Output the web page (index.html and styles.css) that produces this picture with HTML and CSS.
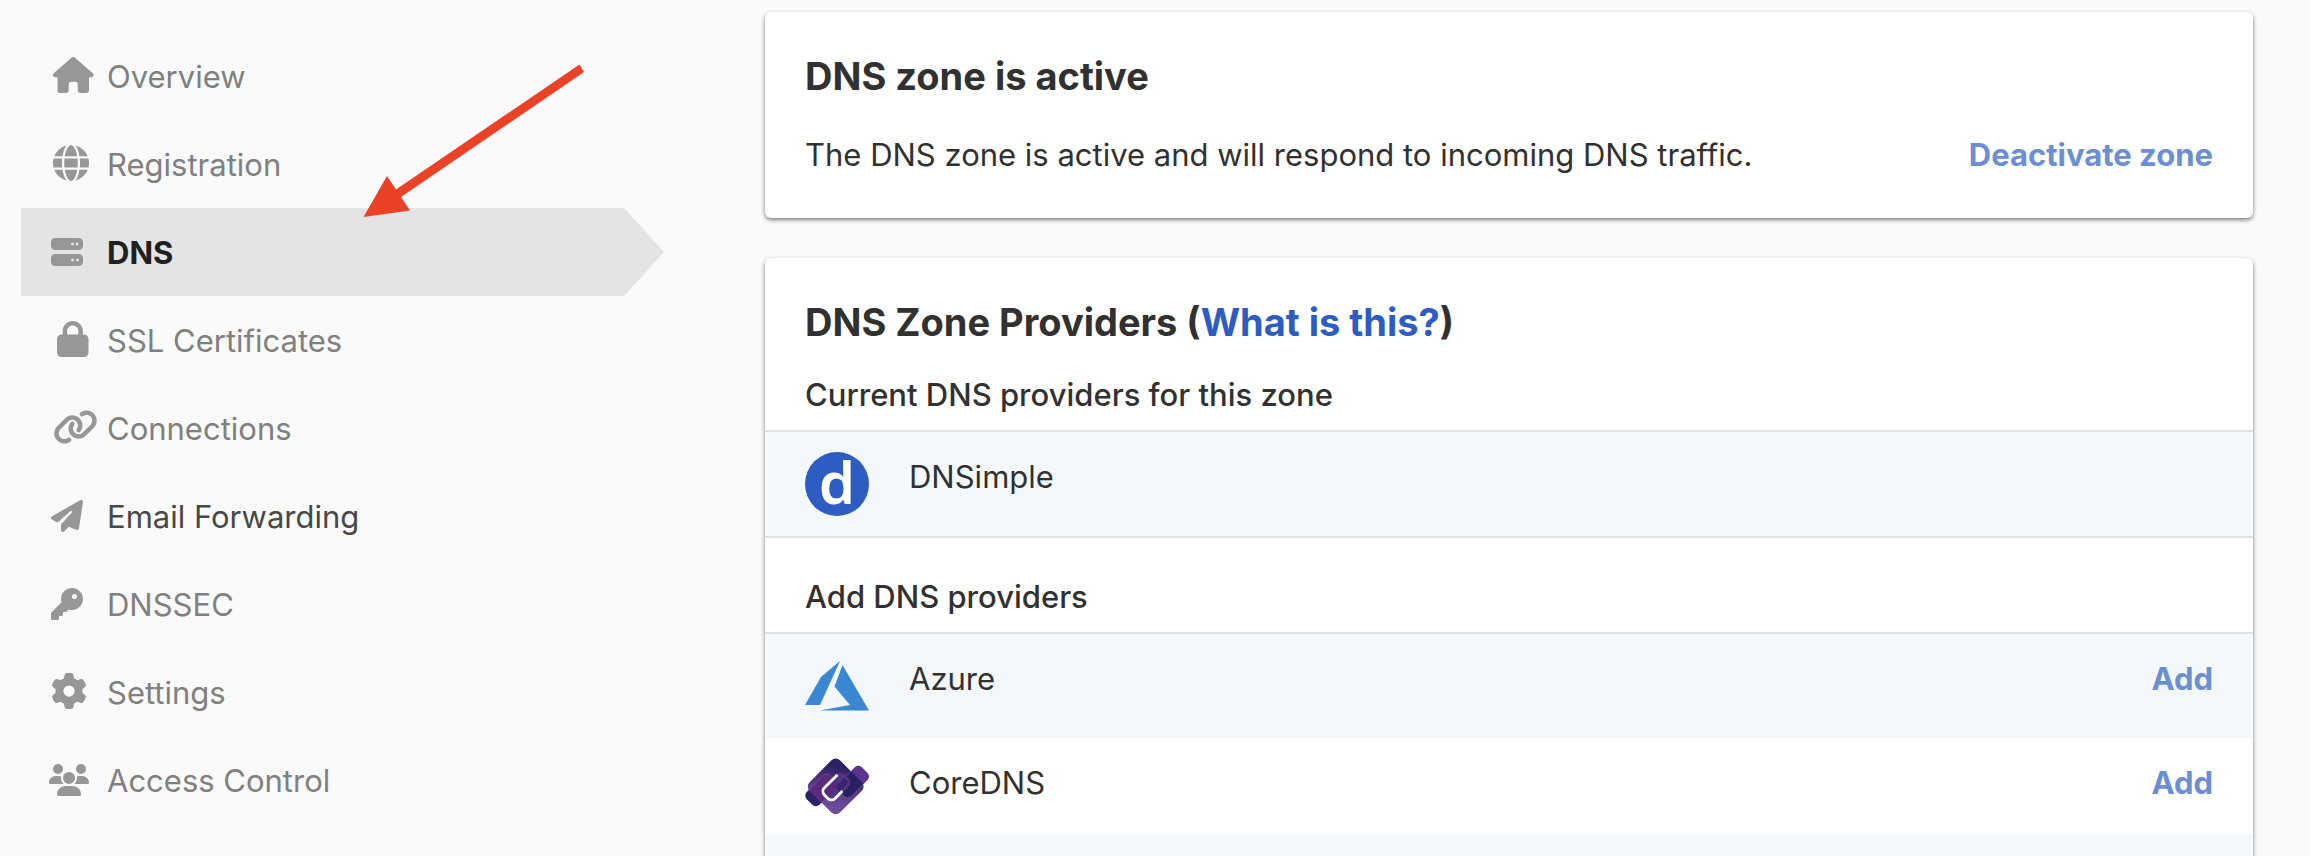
FILE: index.html
```html
<!DOCTYPE html>
<html lang="en">
<head>
<meta charset="utf-8">
<title>DNS</title>
<link rel="stylesheet" href="styles.css">
</head>
<body>
<div class="page">
  <nav class="sidebar" aria-label="Domain">
    <a class="nav-item" href="#overview"><span class="nav-icon"><svg class="icon-large" viewBox="0 0 576 512"><path d="M575.8 255.5c0 18-15 32.1-32 32.1h-32l.7 160.2c0 2.7-.2 5.4-.5 8.1V472c0 22.1-17.9 40-40 40H456c-1.1 0-2.2 0-3.3-.1c-1.4 .1-2.8 .1-4.2 .1H416 392c-22.1 0-40-17.9-40-40V448 384c0-17.7-14.3-32-32-32H256c-17.7 0-32 14.3-32 32v64 24c0 22.1-17.9 40-40 40H160 128.1c-1.5 0-3-.1-4.5-.2c-1.2 .1-2.4 .2-3.6 .2H104c-22.1 0-40-17.9-40-40V360c0-.9 0-1.9 .1-2.8V287.6H32c-18 0-32-14-32-32.1c0-9 3-17 10-24L266.4 8c7-7 15-8 22-8s15 2 21 7L564.8 231.5c8 7 12 15 11 24z"/></svg></span>Overview</a>
    <a class="nav-item" href="#registration"><span class="nav-icon"><svg class="icon-large" viewBox="0 0 512 512"><path d="M352 256c0 22.2-1.2 43.6-3.3 64H163.3c-2.2-20.4-3.3-41.8-3.3-64s1.2-43.6 3.3-64H348.7c2.2 20.4 3.3 41.8 3.3 64zm28.8-64H503.9c5.3 20.5 8.1 41.9 8.1 64s-2.8 43.5-8.1 64H380.8c2.1-20.6 3.2-42 3.2-64s-1.1-43.4-3.2-64zm112.6-32H376.7c-10-63.9-29.8-117.4-55.3-151.6c78.3 20.7 142 77.5 171.9 151.6zm-149.1 0H167.7c6.1-36.4 15.5-68.6 27-94.7c10.5-23.6 22.2-40.7 33.5-51.5C239.4 3.2 248.7 0 256 0s16.6 3.2 27.8 13.8c11.3 10.8 23 27.9 33.5 51.5c11.6 26 20.9 58.2 27 94.7zm-209 0H18.6C48.6 85.9 112.2 29.1 190.6 8.4C165.1 42.6 145.3 96.1 135.3 160zM8.1 192H131.2c-2.1 20.6-3.2 42-3.2 64s1.1 43.4 3.2 64H8.1C2.8 299.5 0 278.1 0 256s2.8-43.5 8.1-64zM194.7 446.6c-11.6-26-20.9-58.2-27-94.6H344.3c-6.1 36.4-15.5 68.6-27 94.6c-10.5 23.6-22.2 40.7-33.5 51.5C272.6 508.8 263.3 512 256 512s-16.6-3.2-27.8-13.8c-11.3-10.8-23-27.9-33.5-51.5zM135.3 352c10 63.9 29.8 117.4 55.3 151.6C112.2 482.9 48.6 426.1 18.6 352H135.3zm358.1 0c-30 74.1-93.6 130.9-171.9 151.6c25.5-34.2 45.2-87.7 55.3-151.6H493.4z"/></svg></span>Registration</a>
    <a class="nav-item nav-item-active" href="#dns" aria-current="page"><span class="nav-icon"><svg class="icon-small" viewBox="0 0 512 512"><path d="M64 32C28.7 32 0 60.7 0 96v64c0 35.3 28.7 64 64 64H448c35.3 0 64-28.7 64-64V96c0-35.3-28.7-64-64-64H64zm280 72a24 24 0 1 1 0 48 24 24 0 1 1 0-48zm48 24a24 24 0 1 1 48 0 24 24 0 1 1-48 0zM64 288c-35.3 0-64 28.7-64 64v64c0 35.3 28.7 64 64 64H448c35.3 0 64-28.7 64-64V352c0-35.3-28.7-64-64-64H64zm280 72a24 24 0 1 1 0 48 24 24 0 1 1 0-48zm56 24a24 24 0 1 1 48 0 24 24 0 1 1-48 0z"/></svg></span>DNS</a>
    <a class="nav-item" href="#ssl"><span class="nav-icon"><svg class="icon-large icon-inset" viewBox="0 0 448 512"><path d="M144 144v48H304V144c0-44.2-35.8-80-80-80s-80 35.8-80 80zM80 192V144C80 64.5 144.5 0 224 0s144 64.5 144 144v48h16c35.3 0 64 28.7 64 64V448c0 35.3-28.7 64-64 64H64c-35.3 0-64-28.7-64-64V256c0-35.3 28.7-64 64-64H80z"/></svg></span>SSL Certificates</a>
    <a class="nav-item" href="#connections"><span class="nav-icon"><svg class="icon-large" viewBox="0 0 640 512"><path d="M579.8 267.7c56.5-56.5 56.5-148 0-204.5c-50-50-128.8-56.5-186.3-15.4l-1.6 1.1c-14.4 10.3-17.7 30.3-7.4 44.6s30.3 17.7 44.6 7.4l1.6-1.1c32.1-22.9 76-19.3 103.8 8.6c31.5 31.5 31.5 82.5 0 114L422.3 334.8c-31.5 31.5-82.5 31.5-114 0c-27.9-27.9-31.5-71.8-8.6-103.8l1.1-1.6c10.3-14.4 6.9-34.4-7.4-44.6s-34.4-6.9-44.6 7.4l-1.1 1.6C206.5 251.2 213 330 263 380c56.5 56.5 148 56.5 204.5 0L579.8 267.7zM60.2 244.3c-56.5 56.5-56.5 148 0 204.5c50 50 128.8 56.5 186.3 15.4l1.6-1.1c14.4-10.3 17.7-30.3 7.4-44.6s-30.3-17.7-44.6-7.4l-1.6 1.1c-32.1 22.9-76 19.3-103.8-8.6C74 372 74 321 105.5 289.5L217.7 177.2c31.5-31.5 82.5-31.5 114 0c27.9 27.9 31.5 71.8 8.6 103.9l-1.1 1.6c-10.3 14.4-6.9 34.4 7.4 44.6s34.4 6.9 44.6-7.4l1.1-1.6C433.5 260.8 427 182 377 132c-56.5-56.5-148-56.5-204.5 0L60.2 244.3z"/></svg></span>Connections</a>
    <a class="nav-item nav-item-dark" href="#email"><span class="nav-icon"><svg class="icon-small" viewBox="0 0 512 512"><path d="M498.1 5.6c10.1 7 15.4 19.1 13.5 31.2l-64 416c-1.5 9.7-7.4 18.2-16 23s-18.9 5.4-28 1.6L284 427.7l-68.5 74.1c-8.9 9.7-22.9 12.9-35.2 8.1S160 493.2 160 480V396.4c0-4 1.5-7.8 4.2-10.7L331.8 202.8c5.8-6.3 5.6-16-.4-22s-15.7-6.4-22-.7L106 360.8 17.7 316.6C7.1 311.3 .3 300.7 0 288.9s5.9-22.8 16.1-28.7l448-256c10.7-6.1 23.9-5.5 34 1.4z"/></svg></span>Email Forwarding</a>
    <a class="nav-item" href="#dnssec"><span class="nav-icon"><svg class="icon-small" viewBox="0 0 512 512"><path d="M336 352c97.2 0 176-78.8 176-176S433.2 0 336 0S160 78.8 160 176c0 18.7 2.9 36.8 8.3 53.7L7 391c-4.5 4.5-7 10.6-7 17v80c0 13.3 10.7 24 24 24h80c13.3 0 24-10.7 24-24V448h40c13.3 0 24-10.7 24-24V384h40c6.4 0 12.5-2.5 17-7l33.3-33.3c16.9 5.4 35 8.3 53.7 8.3zM376 96a40 40 0 1 1 0 80 40 40 0 1 1 0-80z"/></svg></span>DNSSEC</a>
    <a class="nav-item" href="#settings"><span class="nav-icon"><svg class="icon-large icon-flush" viewBox="0 0 512 512"><path d="M495.9 166.6c3.2 8.7 .5 18.4-6.4 24.6l-43.3 39.4c1.1 8.3 1.7 16.8 1.7 25.4s-.6 17.1-1.7 25.4l43.3 39.4c6.9 6.2 9.6 15.9 6.4 24.6c-4.4 11.9-9.7 23.3-15.8 34.3l-4.7 8.1c-6.6 11-14 21.4-22.1 31.2c-5.9 7.2-15.7 9.6-24.5 6.8l-55.7-17.7c-13.4 10.3-28.2 18.9-44 25.4l-12.5 57.1c-2 9.1-9 16.3-18.2 17.8c-13.8 2.3-28 3.5-42.5 3.5s-28.7-1.2-42.5-3.5c-9.2-1.5-16.2-8.7-18.2-17.8l-12.5-57.1c-15.8-6.5-30.6-15.1-44-25.4L83.1 425.9c-8.8 2.8-18.6 .3-24.5-6.8c-8.1-9.8-15.5-20.2-22.1-31.2l-4.7-8.1c-6.1-11-11.4-22.4-15.8-34.3c-3.2-8.7-.5-18.4 6.4-24.6l43.3-39.4C64.6 273.1 64 264.6 64 256s.6-17.1 1.7-25.4L22.4 191.2c-6.9-6.2-9.6-15.9-6.4-24.6c4.4-11.9 9.7-23.3 15.8-34.3l4.7-8.1c6.6-11 14-21.4 22.1-31.2c5.9-7.2 15.7-9.6 24.5-6.8l55.7 17.7c13.4-10.3 28.2-18.9 44-25.4l12.5-57.1c2-9.1 9-16.3 18.2-17.8C227.3 1.2 241.5 0 256 0s28.7 1.2 42.5 3.5c9.2 1.5 16.2 8.7 18.2 17.8l12.5 57.1c15.8 6.5 30.6 15.1 44 25.4l55.7-17.7c8.8-2.8 18.6-.3 24.5 6.8c8.1 9.8 15.5 20.2 22.1 31.2l4.7 8.1c6.1 11 11.4 22.4 15.8 34.3zM256 336a80 80 0 1 0 0-160 80 80 0 1 0 0 160z"/></svg></span>Settings</a>
    <a class="nav-item" href="#access"><span class="nav-icon"><svg class="icon-small icon-outset" viewBox="0 0 640 512"><path d="M144 0a80 80 0 1 1 0 160A80 80 0 1 1 144 0zM512 0a80 80 0 1 1 0 160A80 80 0 1 1 512 0zM0 298.7C0 239.8 47.8 192 106.7 192h42.7c15.9 0 31 3.5 44.6 9.7c-1.3 7.2-1.9 14.7-1.9 22.3c0 38.2 16.8 72.5 43.3 96c-.2 0-.4 0-.7 0H21.3C9.6 320 0 310.4 0 298.7zM405.3 320c-.2 0-.4 0-.7 0c26.6-23.5 43.3-57.8 43.3-96c0-7.6-.7-15-1.9-22.3c13.6-6.3 28.7-9.7 44.6-9.7h42.7C592.2 192 640 239.8 640 298.7c0 11.8-9.6 21.3-21.3 21.3H405.3zM224 224a96 96 0 1 1 192 0 96 96 0 1 1-192 0zM128 485.3C128 411.7 187.7 352 261.3 352H378.7C452.3 352 512 411.7 512 485.3c0 14.7-11.9 26.7-26.7 26.7H154.7c-14.7 0-26.7-11.9-26.7-26.7z"/></svg></span>Access Control</a>
    <svg class="pointer-arrow" viewBox="0 0 222 153" aria-hidden="true"><path d="M216.5 .5L221 8L38 133L47 146.5L.5 153L24 112L33 125.5Z"/></svg>
  </nav>

  <main class="content">
    <section class="card card-status">
      <h2 class="card-title">DNS zone is active</h2>
      <div class="status-row">
        <p class="status-text">The DNS zone is active and will respond to incoming DNS traffic.</p>
        <button class="action" type="button">Deactivate zone</button>
      </div>
    </section>

    <section class="card card-providers">
      <h2 class="card-title">DNS Zone Providers (<a class="help-link" href="#help">What is this?</a>)</h2>
      <h3 class="list-title">Current DNS providers for this zone</h3>
      <ul class="provider-list provider-list-current">
        <li class="provider"><span class="logo logo-dnsimple" aria-hidden="true">d</span><span class="provider-name">DNSimple</span></li>
      </ul>
      <h3 class="list-title">Add DNS providers</h3>
      <ul class="provider-list">
        <li class="provider">
          <svg class="logo" viewBox="0 0 64 64" aria-hidden="true"><path fill="#3c87d1" d="M35 7L16 23L0 51H15ZM37.500 11L29.500 32.500L45 51L15 56.500H64Z"/></svg>
          <span class="provider-name">Azure</span>
          <button class="action" type="button" aria-label="Add Azure">Add</button>
        </li>
        <li class="provider">
          <svg class="logo logo-wide" viewBox="0 0 64 56" aria-hidden="true">
            <defs>
              <linearGradient id="core" x1="0" y1="1" x2="1" y2="0.4"><stop offset="0" stop-color="#7653a3"/><stop offset="0.5" stop-color="#5a3c89"/><stop offset="1" stop-color="#2b2163"/></linearGradient>
              <clipPath id="core-clip"><rect x="-21.500" y="-21.500" width="43" height="43" rx="6"/></clipPath>
            </defs>
            <g transform="translate(30.700 28.400) rotate(-45)">
              <rect x="-29.500" y="-16.500" width="33" height="18" rx="5" fill="#2b2167"/>
              <rect x="-1" y="0" width="33" height="18" rx="5" fill="#5d338f"/>
              <rect x="-21.500" y="-21.500" width="43" height="43" rx="6" fill="url(#core)"/>
              <g clip-path="url(#core-clip)" stroke="#8468a8" stroke-width="0.500">
                <rect x="-29.500" y="-16.500" width="33" height="18" rx="5" fill="#5b2a7c"/>
                <rect x="-1" y="0" width="33" height="18" rx="5" fill="#2a2064"/>
              </g>
              <rect x="-14" y="-7" width="27.500" height="15" rx="5" fill="#4f3585"/>
              <path d="M-14 -2a5 5 0 0 1 5 -5H3.500V1.500H-14Z" fill="#5b2a7c"/>
              <path d="M-1 8V5a5 5 0 0 1 5 -5H13.500V3a5 5 0 0 1 -5 5Z" fill="#33266d"/>
              <path d="M1 8H8.500a5 5 0 0 0 5 -5V-2a5 5 0 0 0 -5 -5" fill="none" stroke="#5d2f85" stroke-width="2.500"/>
              <path d="M9.500 -7H-9a5 5 0 0 0 -5 5V3a5 5 0 0 0 5 5H1.500" fill="none" stroke="#fff" stroke-width="2.800"/>
            </g>
          </svg>
          <span class="provider-name">CoreDNS</span>
          <button class="action" type="button" aria-label="Add CoreDNS">Add</button>
        </li>
        <li class="provider"></li>
      </ul>
    </section>
  </main>
</div>
</body>
</html>
```
FILE: styles.css
```css
* {
  box-sizing: border-box;
}

body {
  margin: 0;
  background: #fafafa;
  color: #313131;
  font-family: Inter, "Liberation Sans", sans-serif;
  font-size: 31px;
  line-height: 48px;
}

h2,
h3,
p,
ul {
  margin: 0;
  padding: 0;
}

.page {
  display: grid;
  grid-template-columns: 643fr 1488fr;
  column-gap: 101px;
  height: 100vh;
  padding: 12px 57px 0 21px;
  overflow: hidden;
}

.sidebar {
  position: relative;
  padding-top: 20px;
}

.nav-item {
  display: flex;
  align-items: center;
  height: 88px;
  padding: 2px 0 0 30px;
  color: #808080;
  text-decoration: none;
}

.nav-item-active {
  background: #e4e4e4;
  color: #202020;
  font-weight: 700;
  clip-path: polygon(0 0, calc(100% - 40px) 0, 100% 50%, calc(100% - 40px) 100%, 0 100%);
}

.nav-item-dark {
  color: #484848;
}

.nav-icon {
  display: flex;
  flex: none;
  width: 56px;
}

.nav-icon svg {
  fill: #979797;
}

.icon-small {
  height: 32px;
  margin-bottom: 2px;
}

.icon-large {
  height: 36px;
  margin: 0 0 4px 2px;
}

.icon-inset {
  margin-left: 6px;
}

.icon-flush {
  margin-left: 0;
}

.icon-outset {
  margin-left: -2px;
}

.pointer-arrow {
  position: absolute;
  top: 52px;
  left: 342px;
  width: 222px;
  fill: #ea4127;
}

.card {
  background: #fff;
  border-radius: 6px;
  box-shadow: 0 2px 4px rgba(0, 0, 0, 0.5);
}

.card-status {
  margin-bottom: 40px;
  padding: 40px 40px 39px;
}

.card-title {
  font-size: 38px;
  font-weight: 700;
  line-height: 48px;
}

.status-row {
  display: flex;
  align-items: center;
  justify-content: space-between;
  margin-top: 31px;
}

.action {
  padding: 0;
  border: 0;
  background: none;
  color: #6c8fd4;
  font: inherit;
  font-weight: 700;
  cursor: pointer;
}

.help-link {
  color: #2d5dc2;
  text-decoration: none;
}

.card-providers {
  height: 900px;
  padding-top: 40px;
}

.card-providers .card-title {
  margin-bottom: 24px;
  padding: 0 40px;
}

.list-title {
  padding: 1px 40px 11px;
  font-size: 31px;
  font-weight: 500;
}

.provider-list {
  border-top: 2px solid #e2e2e2;
  list-style: none;
}

.provider-list-current {
  margin-bottom: 34px;
  border-bottom: 2px solid #e2e2e2;
}

.provider {
  display: flex;
  align-items: flex-start;
  padding: 20px 40px;
  line-height: 50px;
}

.provider:nth-child(odd) {
  background: #f3f8fd;
}

.provider:empty {
  height: 104px;
}

.logo {
  flex: none;
  width: 64px;
  height: 64px;
  margin-right: 40px;
}

.logo-wide {
  height: 56px;
  overflow: visible;
}

.logo-dnsimple {
  border-radius: 50%;
  background: #2d5dc2;
  color: #fff;
  font-family: "Noto Sans", sans-serif;
  font-size: 58px;
  font-weight: 600;
  line-height: 60px;
  text-align: center;
}

.provider-name {
  flex: 1;
}
```
